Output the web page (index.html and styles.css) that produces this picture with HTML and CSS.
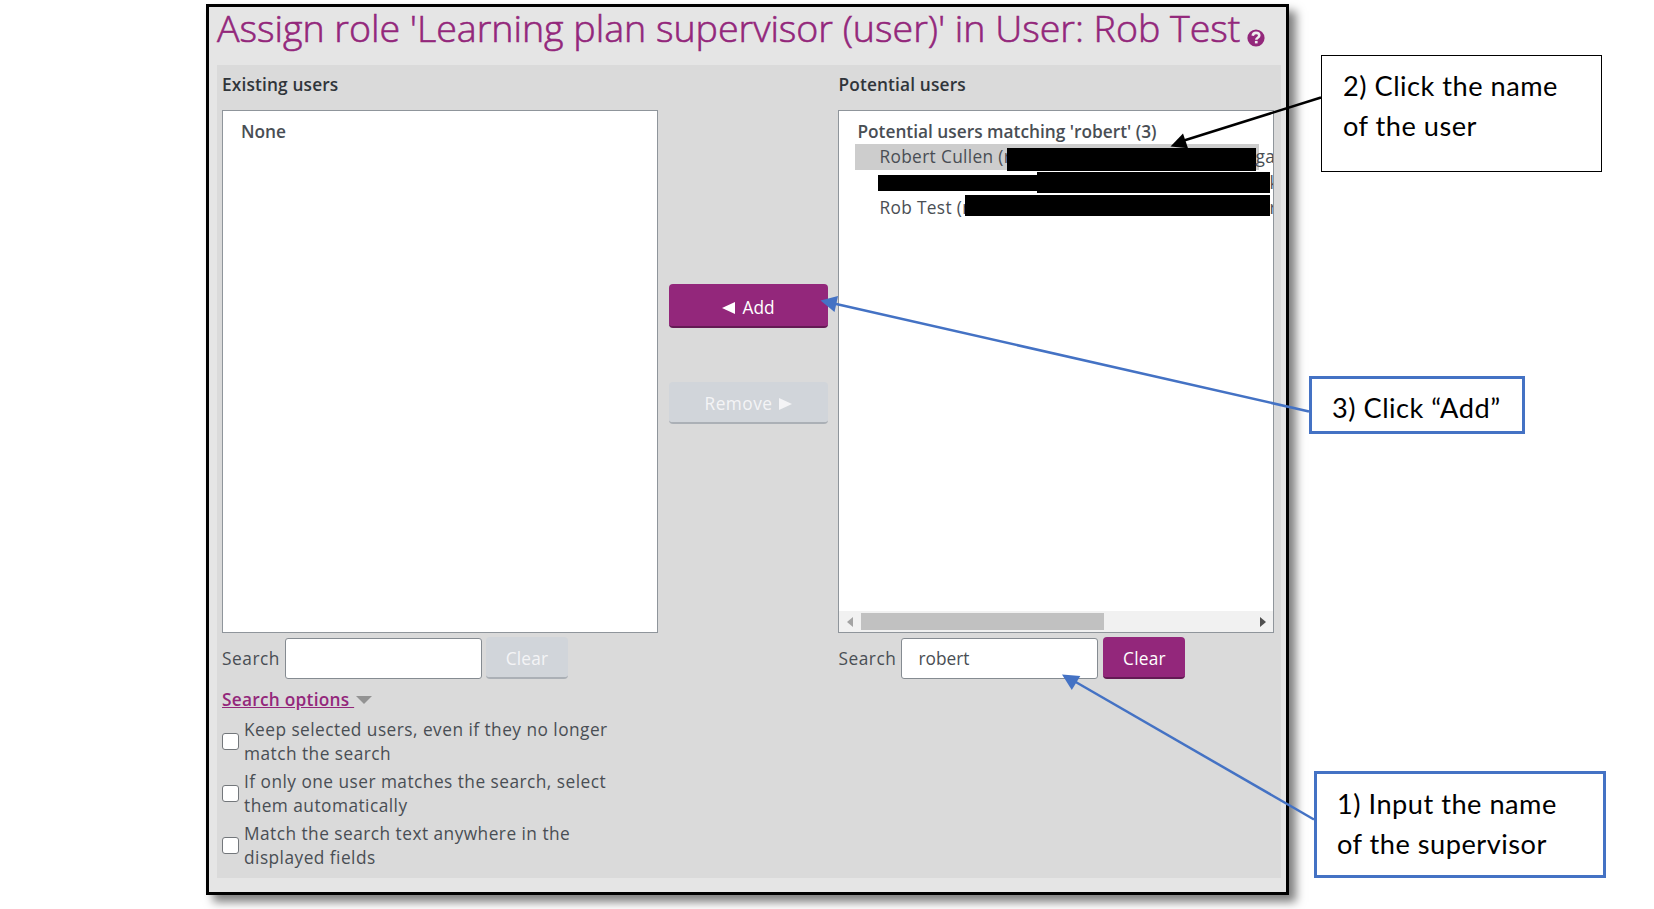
FILE: index.html
```html
<!DOCTYPE html>
<html lang="en">
<head>
<meta charset="utf-8">
<title>Assign role</title>
<link rel="stylesheet" href="styles.css">
</head>
<body>
<main class="frame">
  <header class="header">
    <h1 class="title">Assign role 'Learning plan supervisor (user)' in User: Rob Test</h1>
    <svg class="help" viewBox="0 0 18 18"><circle cx="9" cy="9" r="8.6" fill="#93277b"/><path d="M5.7 6.7C6 4.7 7.300 3.900 9 3.900C10.900 3.900 12.300 5 12.300 6.600C12.300 8.900 9.300 8.600 9.300 10.700" fill="none" stroke="#eee" stroke-width="2.600"/><rect x="7.900" y="11.900" width="2.700" height="2.500" fill="#eee"/></svg>
  </header>
  <section class="panel">
    <div class="column">
      <h2 class="heading">Existing users</h2>
      <div class="list"><div class="group">None</div></div>
      <div class="search">
        <label class="search-label">Search</label>
        <div class="field"></div>
        <div class="button clear disabled">Clear</div>
      </div>
      <div class="options-toggle"><a class="options-link">Search options&nbsp;</a><svg class="caret" viewBox="0 0 16 8"><path d="M0 0H16L8 8Z" fill="#939393"/></svg></div>
      <div class="option"><span class="box"></span><span class="option-text">Keep selected users, even if they no longer<br>match the search</span></div>
      <div class="option"><span class="box"></span><span class="option-text">If only one user matches the search, select<br>them automatically</span></div>
      <div class="option"><span class="box"></span><span class="option-text">Match the search text anywhere in the<br>displayed fields</span></div>
    </div>
    <div class="actions">
      <div class="button add"><svg class="tri" viewBox="0 0 13 12"><path d="M13 0V12L0 6Z" fill="#fff"/></svg>Add</div>
      <div class="button remove disabled">Remove<svg class="tri" viewBox="0 0 13 12"><path d="M0 0V12L13 6Z" fill="#f4f4f6"/></svg></div>
    </div>
    <div class="column">
      <h2 class="heading potential">Potential users</h2>
      <div class="list">
        <div class="group matching">Potential users matching 'robert' (3)</div>
        <div class="user selected"><span class="name">Robert Cullen (r</span><span class="mask mask-a"></span><span class="tail">ga</span></div>
        <div class="user"><span class="mask mask-b"></span><span class="mask mask-c"></span><span class="tail sliver">k</span></div>
        <div class="user"><span class="name">Rob Test (r</span><span class="mask mask-d"></span><span class="tail sliver">r</span></div>
        <div class="scrollbar">
          <svg class="arrow" viewBox="0 0 6 10"><path d="M6 0V10L0 5Z" fill="#a3a3a3"/></svg>
          <span class="thumb"></span>
          <svg class="arrow" viewBox="0 0 6 10"><path d="M0 0V10L6 5Z" fill="#505050"/></svg>
        </div>
      </div>
      <div class="search">
        <label class="search-label">Search</label>
        <div class="field">robert</div>
        <div class="button clear">Clear</div>
      </div>
    </div>
  </section>
</main>
<svg class="connectors" viewBox="0 0 1654 909">
  <path d="M1321 97.500L1184 140.500" stroke="#000" stroke-width="2.500"/>
  <path d="M1170.500 146.500L1183 133.500L1188 148.200Z" fill="#000"/>
  <path d="M1309 411.500L834 303.500" stroke="#4472c4" stroke-width="2.500"/>
  <path d="M820.500 300.500L838 296L834.500 312Z" fill="#4472c4"/>
  <path d="M1314 819.500L1074 681" stroke="#4472c4" stroke-width="2.500"/>
  <path d="M1062 674.500L1080.300 676L1071.800 690Z" fill="#4472c4"/>
</svg>
<aside class="note note-click">2) Click the name<br>of the user</aside>
<aside class="note note-add">3) Click “Add”</aside>
<aside class="note note-input">1) Input the name<br>of the supervisor</aside>
</body>
</html>
```
FILE: styles.css
```css
* { box-sizing: border-box; }
body {
  margin: 0;
  width: 1654px;
  height: 909px;
  overflow: hidden;
  position: relative;
  background: #fff;
  font-family: "Open Sans", sans-serif;
  font-size: 17.3px;
  color: #494e54;
  white-space: nowrap;
}
.frame {
  width: 1083px;
  height: 891px;
  margin: 4px 0 0 206px;
  border: 3px solid #000;
  background: #e5e5e5;
  padding: 0 5px 0 8px;
  box-shadow: 7px 7px 9px rgba(0, 0, 0, .5);
}
.header { display: flex; height: 58px; align-items: flex-start; }
.title {
  margin: 0;
  width: 1030px;
  font-size: 37.6px;
  line-height: 41px;
  font-weight: 300;
  letter-spacing: -.025px;
  -webkit-text-stroke: .6px #93277b;
  color: #93277b;
}
.help { width: 18px; height: 18px; margin-top: 22px; }
.panel {
  display: flex;
  height: 813px;
  padding: 0 7px 0 5px;
  background: #dadada;
}
.column { width: 436px; }
.heading {
  margin: 0;
  height: 45px;
  padding-top: 8px;
  font-size: 17.3px;
  line-height: 24px;
  font-weight: 600;
  letter-spacing: .15px;
  color: #30353a;
}
.list {
  display: flex;
  flex-direction: column;
  height: 523px;
  border: 1px solid #8f959b;
  background: #fff;
  padding-top: 8px;
  overflow: hidden;
}
.group { height: 25px; padding-left: 18px; line-height: 25px; font-weight: 600; }
.user {
  display: flex;
  height: 25.500px;
  margin-left: 16px;
  padding-left: 24px;
  line-height: 25px;
  letter-spacing: .35px;
  position: relative;
}
.user.selected { width: 404px; background: #cdcdcd; }
.mask { position: absolute; background: #000; }
.mask-a { left: 152px; top: 4px; width: 249px; height: 23px; }
.mask-b { left: 23px; top: 5px; width: 160px; height: 16px; }
.mask-c { left: 182px; top: 2px; width: 233px; height: 21px; }
.mask-d { left: 110px; top: 0; width: 305px; height: 21px; }
.tail { position: absolute; left: 400px; top: 0; width: 18px; overflow: hidden; }
.tail.sliver { left: 414px; width: 4px; }
.scrollbar {
  display: flex;
  align-items: center;
  height: 21px;
  margin-top: auto;
  padding: 0 7px 0 8px;
  background: #f1f1f1;
}
.arrow { width: 6px; height: 10px; }
.thumb { width: 243px; height: 17px; margin: 0 auto 0 8px; background: #c1c1c1; }
.search { display: flex; height: 46px; padding-top: 4px; }
.search-label { width: 63px; line-height: 44px; letter-spacing: .55px; }
.field {
  width: 197px;
  height: 41px;
  margin-top: 1px;
  padding-left: 16px;
  border: 1px solid #858b91;
  border-radius: 3px;
  background: #fff;
  line-height: 40px;
}
.button {
  display: flex;
  align-items: center;
  justify-content: center;
  padding-top: 2px;
  border-radius: 4px;
  border-bottom: 2px solid #641a54;
  background: #93277b;
  color: #fff;
}
.button.disabled { background: #d1d5da; border-bottom-color: #abb0b6; color: #f4f4f6; }
.clear { width: 82px; height: 42px; margin-left: 5px; letter-spacing: .2px; }
.clear.disabled { margin-left: 4px; }
.actions { width: 181px; padding: 219px 10px 0 11px; }
.add { height: 44px; gap: 7px; padding-top: 4px; }
.remove { height: 42px; margin-top: 54px; gap: 7px; letter-spacing: .45px; }
.tri { width: 13px; height: 12px; margin-top: 2px; }
.options-toggle { display: flex; align-items: center; height: 37px; padding-top: 5px; line-height: 24px; }
.options-link { color: #93277b; text-decoration: underline; font-weight: 600; letter-spacing: .25px; }
.caret { width: 16px; height: 8px; margin-left: 2px; }
.option { display: flex; align-items: center; height: 52px; line-height: 24px; letter-spacing: .47px; }
.box {
  width: 17px;
  height: 17px;
  margin: 0 5px 2px 0;
  border: 1px solid #73777b;
  border-radius: 3px;
  background: #fff;
}
.connectors { position: absolute; left: 0; top: 0; width: 1654px; height: 909px; }
.note {
  position: absolute;
  background: #fff;
  color: #000;
  font-family: Lato, sans-serif;
  font-size: 27.200px;
  line-height: 40px;
  letter-spacing: .5px;
}
.note-click { left: 1321px; top: 55px; width: 281px; height: 117px; padding: 10px 21px; border: 1px solid #000; }
.note-add { left: 1309px; top: 376px; width: 216px; height: 58px; padding: 9px 20px; border: 3px solid #4472c4; }
.note-input { left: 1314px; top: 771px; width: 292px; height: 107px; padding: 10px 20px; border: 3px solid #4472c4; }
```
